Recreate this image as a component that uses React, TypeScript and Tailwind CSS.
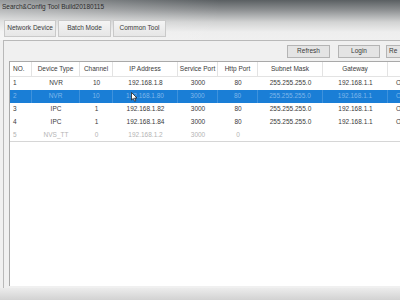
import React from 'react';

const cols = [
  { label: 'NO.', w: 'w-[22px]', center: false },
  { label: 'Device Type', w: 'w-[48px]', center: true },
  { label: 'Channel', w: 'w-[33px]', center: true },
  { label: 'IP Address', w: 'w-[65px]', center: true },
  { label: 'Service Port', w: 'w-[40px]', center: true },
  { label: 'Http Port', w: 'w-[40px]', center: true },
  { label: 'Subnet Mask', w: 'w-[65px]', center: true },
  { label: 'Gateway', w: 'w-[65px]', center: true },
  { label: '', w: 'w-[60px]', center: false },
];

const rows = [
  ['1', 'NVR', '10', '192.168.1.8', '3000', '80', '255.255.255.0', '192.168.1.1', 'O'],
  ['2', 'NVR', '10', '192.168.1.80', '3000', '80', '255.255.255.0', '192.168.1.1', 'O'],
  ['3', 'IPC', '1', '192.168.1.82', '3000', '80', '255.255.255.0', '192.168.1.1', 'O'],
  ['4', 'IPC', '1', '192.168.1.84', '3000', '80', '255.255.255.0', '192.168.1.1', 'O'],
  ['5', 'NVS_TT', '0', '192.168.1.2', '3000', '0', '', '', ''],
];

function Tab({ label, w }: { label: string; w: string }) {
  return (
    <div
      className={`${w} h-[17px] flex items-center justify-center border border-[#c9c9c9] bg-[linear-gradient(to_bottom,#f4f4f4,#e6e6e6)] text-[#3a3a3a]`}
    >
      {label}
    </div>
  );
}

function Button({ label, w, left }: { label: string; w: string; left?: boolean }) {
  return (
    <div
      className={`${w} h-[13px] shrink-0 flex items-center ${left ? 'justify-start pl-[2px]' : 'justify-center'} border border-[#b4b4b4] bg-[#e4e4e4] text-[#3a3a3a]`}
    >
      {label}
    </div>
  );
}

export default function App() {
  return (
    <div className="relative w-[400px] h-[300px] overflow-hidden bg-[#f0f0f0] flex flex-col font-['Liberation_Sans',Arial,sans-serif] text-[6.5px] leading-none">
      {/* title bar + tabs */}
      <div className="h-[40px] shrink-0 flex flex-col bg-[linear-gradient(to_right,rgba(255,255,255,0.38),rgba(255,255,255,0)_55%),linear-gradient(to_bottom,#5a5f62,#8d9092_10px,#d2d3d3_22px,#eeeeee_32px,#f0f0f0)]">
        <div className="h-[20px] pl-[2px] pt-[4px] text-[#2c2c2c]">Search&amp;Config Tool Build20180115</div>
        <div className="flex pl-[4px] gap-[2px]">
          <Tab label="Network Device" w="w-[52px]" />
          <Tab label="Batch Mode" w="w-[53px]" />
          <Tab label="Common Tool" w="w-[53px]" />
        </div>
      </div>

      {/* content panel */}
      <div className="flex-1 flex flex-col ml-[3px] border-t border-l border-[#b9b9b9] bg-[#f0f0f0]">
        <div className="flex pt-[4px] pl-[283px]">
          <Button label="Refresh" w="w-[43px]" />
          <Button label="Login" w="w-[42px] ml-[8px]" />
          <Button label="Re" w="w-[42px] ml-[6px]" left />
        </div>

        <div className="flex-1 mt-[3px] ml-[5px] mb-[2px] border-t border-l border-[#a9a9a9] bg-white flex flex-col">
          {/* header */}
          <div className="flex h-[15px] border-b border-[#e3e3e3] text-[#3a3a3a]">
            {cols.map((c, i) => (
              <div
                key={i}
                className={`${c.w} shrink-0 h-full flex items-center ${c.center ? 'justify-center' : 'justify-start pl-[3px]'} border-r border-[#e3e3e3]`}
              >
                {c.label}
              </div>
            ))}
          </div>

          {/* rows */}
          {rows.map((r, ri) => {
            const sel = ri === 1;
            const dim = ri === 4;
            return (
              <div
                key={ri}
                className={`flex h-[13px] ${sel ? 'bg-[#1a7ed6] text-[#7fb6ea]' : dim ? 'text-[#b4b4b4]' : 'text-[#3a3a3a]'} ${ri === rows.length - 1 ? 'border-b border-[#d6d6d6]' : ''}`}
              >
                {r.map((v, ci) => (
                  <div
                    key={ci}
                    className={`${cols[ci].w} shrink-0 h-full flex items-center ${cols[ci].center ? 'justify-center' : ci === 8 ? 'justify-start pl-[8px]' : 'justify-start pl-[3px]'} ${sel ? 'border-r border-[#3f92dc]' : ''}`}
                  >
                    {v}
                  </div>
                ))}
              </div>
            );
          })}
          <div className="flex-1" />
        </div>
      </div>

      {/* bottom vignette */}
      <div className="h-[12px] shrink-0 bg-[linear-gradient(to_bottom,#ececec,#d2d2d2)]" />

      {/* mouse pointer */}
      <svg className="absolute left-[131px] top-[92px]" width="7" height="10" viewBox="0 0 7 10">
        <path d="M0.5 0.5 L0.5 8 L2.3 6.4 L3.6 9.3 L4.8 8.8 L3.6 6 L6 6 Z" fill="#fff" stroke="#222" strokeWidth="0.8" />
      </svg>
    </div>
  );
}
